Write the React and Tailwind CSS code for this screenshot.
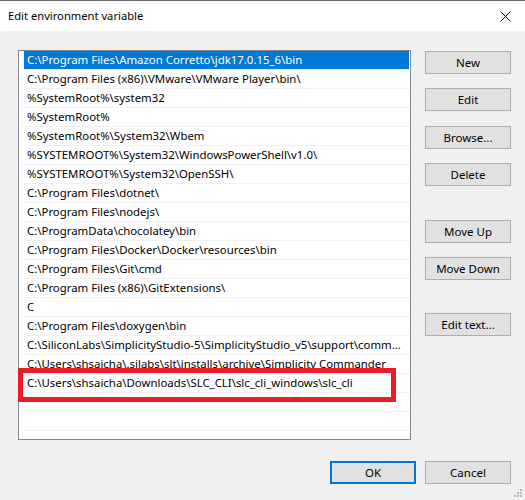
import React from 'react';

const paths = [
    'C:\\Program Files\\Amazon Corretto\\jdk17.0.15_6\\bin',
    'C:\\Program Files (x86)\\VMware\\VMware Player\\bin\\',
    '%SystemRoot%\\system32',
    '%SystemRoot%',
    '%SystemRoot%\\System32\\Wbem',
    '%SYSTEMROOT%\\System32\\WindowsPowerShell\\v1.0\\',
    '%SYSTEMROOT%\\System32\\OpenSSH\\',
    'C:\\Program Files\\dotnet\\',
    'C:\\Program Files\\nodejs\\',
    'C:\\ProgramData\\chocolatey\\bin',
    'C:\\Program Files\\Docker\\Docker\\resources\\bin',
    'C:\\Program Files\\Git\\cmd',
    'C:\\Program Files (x86)\\GitExtensions\\',
    'C',
    'C:\\Program Files\\doxygen\\bin',
    'C:\\SiliconLabs\\SimplicityStudio-5\\SimplicityStudio_v5\\support\\comm...',
    'C:\\Users\\shsaicha\\.silabs\\slt\\installs\\archive\\Simplicity Commander',
    'C:\\Users\\shsaicha\\Downloads\\SLC_CLI\\slc_cli_windows\\slc_cli',
    '',
    '',
    '',
];

const Button = ({ children, className = '', primary = false }) => (
    <button
        className={`w-[86px] h-[23px] bg-[#e1e1e1] text-black text-[11.5px] leading-none flex items-center justify-center ${
            primary ? 'border-2 border-[#0078d7]' : 'border border-[#adadad]'
        } ${className}`}
    >
        {children}
    </button>
);

const App = () => {
    return (
        <div
            className="w-[525px] h-[500px] bg-[#f0f0f0] flex flex-col border-t border-[#6b6b6b] relative overflow-hidden"
            style={{ fontFamily: '"Noto Sans", sans-serif' }}
        >
            {/* title bar */}
            <div className="h-[30px] bg-white flex items-center justify-between pl-[8px] pr-[10px]">
                <span className="text-[11.2px] text-black">Edit environment variable</span>
                <svg width="11" height="11" viewBox="0 0 11 11" className="mr-[4px]">
                    <path d="M0.5 0.5 L10.5 10.5 M10.5 0.5 L0.5 10.5" stroke="#000" strokeWidth="1" />
                </svg>
            </div>

            <div className="flex pl-[18px] pt-[19px]">
                {/* path list */}
                <div className="w-[393px] h-[390px] bg-white border border-[#828790] pl-[5px] pr-[1px] relative">
                    {paths.map((p, i) => (
                        <div
                            key={i}
                            className={`h-[19px] border-b border-[#f0f0f0] pl-[3px] text-[11.4px] leading-[18px] whitespace-nowrap overflow-hidden text-ellipsis ${
                                i === 0 ? 'bg-[#0078d7] text-white' : 'text-black'
                            }`}
                        >
                            {p}
                        </div>
                    ))}
                    {/* highlight around the new entry */}
                    <div className="absolute left-[-1px] top-[317px] w-[378px] h-[34px] border-[5px] border-[#ed1c24]" />
                </div>

                {/* side buttons */}
                <div className="flex flex-col ml-[14px] pt-[1px]">
                    <Button>New</Button>
                    <Button className="mt-[14px]">Edit</Button>
                    <Button className="mt-[15px]">Browse...</Button>
                    <Button className="mt-[14px]">Delete</Button>
                    <Button className="mt-[34px]">Move Up</Button>
                    <Button className="mt-[14px]">Move Down</Button>
                    <Button className="mt-[33px]">Edit text...</Button>
                </div>
            </div>

            {/* dialog buttons */}
            <div className="flex justify-end gap-[9px] pr-[14px] mt-[21px]">
                <Button primary>OK</Button>
                <Button>Cancel</Button>
            </div>

            {/* size grip */}
            <svg width="8" height="8" viewBox="0 0 8 8" className="absolute right-[3px] bottom-[3px]">
                <rect x="6" y="0" width="2" height="2" fill="#b8b8b8" />
                <rect x="3" y="3" width="2" height="2" fill="#b8b8b8" />
                <rect x="6" y="3" width="2" height="2" fill="#b8b8b8" />
                <rect x="0" y="6" width="2" height="2" fill="#b8b8b8" />
                <rect x="3" y="6" width="2" height="2" fill="#b8b8b8" />
                <rect x="6" y="6" width="2" height="2" fill="#b8b8b8" />
            </svg>
        </div>
    );
};

export default App;
